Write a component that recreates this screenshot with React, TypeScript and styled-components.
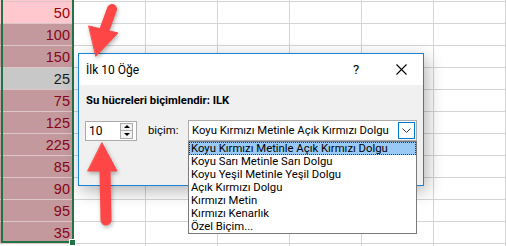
import { Fragment } from "react";
import styled, { createGlobalStyle } from "styled-components";

const GlobalStyle = createGlobalStyle`
  html, body {
    margin: 0;
    padding: 0;
    background: #fff;
  }
  body {
    overflow: hidden;
  }
`;

const Screen = styled.div`
  position: relative;
  width: 506px;
  height: 246px;
  overflow: hidden;
  background: #fff;
`;

const Sheet = styled.div`
  display: grid;
  grid-template-columns: 74px repeat(6, 72px);
  grid-auto-rows: 22px;
  margin-top: -20px;
`;

type CellTone = "plain" | "active" | "selected" | "grey";

const toneBg: Record<CellTone, string> = {
  plain: "#fff",
  active: "#ffc7ce",
  selected: "#c4999d",
  grey: "#c8c8c8",
};

const toneInk: Record<CellTone, string> = {
  plain: "#000",
  active: "#9c0006",
  selected: "#86051a",
  grey: "#1a1a1a",
};

const Cell = styled.div<{ $tone: CellTone; $first?: boolean }>`
  box-sizing: border-box;
  display: flex;
  align-items: center;
  justify-content: flex-end;
  padding-right: 4px;
  background: ${({ $tone }) => toneBg[$tone]};
  color: ${({ $tone }) => toneInk[$tone]};
  border-right: ${({ $first }) => ($first ? "none" : "1px solid #d4d4d4")};
  border-bottom: 1px solid ${({ $first }) => ($first ? "#dcc6c8" : "#d4d4d4")};
  font-family: "Liberation Sans", Arial, sans-serif;
  font-size: 14.5px;
  padding-top: 1px;
`;

const Selection = styled.div`
  position: absolute;
  left: 1px;
  top: -4px;
  width: 73px;
  height: 247px;
  box-sizing: border-box;
  border: 2px solid #217346;
  pointer-events: none;
`;

const FillHandle = styled.div`
  position: absolute;
  right: -4px;
  bottom: -5px;
  width: 5px;
  height: 5px;
  background: #217346;
  border: 1px solid #fff;
`;

const Dialog = styled.div`
  position: absolute;
  left: 78px;
  top: 53px;
  width: 346px;
  height: 133px;
  box-sizing: border-box;
  border: 1px solid #1883d7;
  background: #f0f0f0;
  box-shadow: 3px 5px 16px rgba(0, 0, 0, 0.3);
  display: flex;
  flex-direction: column;
  font-family: Roboto, "Noto Sans", sans-serif;
  font-size: 11.3px;
  color: #000;
`;

const TitleBar = styled.div`
  height: 31px;
  flex-shrink: 0;
  background: #fff;
  display: flex;
  align-items: center;
  padding-left: 7px;
`;

const TitleText = styled.span`
  font-size: 12px;
  flex: 1;
`;

const TitleButton = styled.span<{ $w: number; $gap?: number }>`
  width: ${({ $w }) => $w}px;
  margin-right: ${({ $gap }) => $gap ?? 0}px;
  display: flex;
  justify-content: center;
  align-items: center;
  font-size: 13px;
`;

const Body = styled.div`
  display: flex;
  flex-direction: column;
  padding: 8px 6px 0 6px;
`;

const Heading = styled.div`
  font-weight: 700;
  line-height: 15px;
  margin-left: 1px;
`;

const FieldRow = styled.div`
  display: flex;
  align-items: center;
  margin-top: 12px;
`;

const Spinner = styled.div`
  width: 52px;
  height: 20px;
  box-sizing: border-box;
  border: 1px solid #ababab;
  background: #fff;
  display: flex;
  align-items: center;
  padding: 1px 3px 1px 3px;
  font-size: 12px;
`;

const SpinValue = styled.span`
  flex: 1;
`;

const SpinButtons = styled.div`
  width: 13px;
  height: 16px;
  box-sizing: border-box;
  border: 1px solid #ababab;
  background: #f2f2f2;
  display: flex;
  flex-direction: column;
`;

const SpinHalf = styled.div<{ $up?: boolean }>`
  flex: 1;
  display: flex;
  align-items: center;
  justify-content: center;
  border-bottom: ${({ $up }) => ($up ? "1px solid #ababab" : "none")};
  &::after {
    content: "";
    border-left: 3px solid transparent;
    border-right: 3px solid transparent;
    ${({ $up }) =>
      $up ? "border-bottom: 3px solid #000;" : "border-top: 3px solid #000;"}
  }
`;

const Label = styled.span`
  margin-left: 11px;
  width: 40px;
`;

const Combo = styled.div`
  position: relative;
  width: 229px;
  height: 21px;
  box-sizing: border-box;
  border: 1px solid #ababab;
  background: #fff;
  display: flex;
  align-items: center;
  padding-left: 3px;
`;

const ComboText = styled.span`
  flex: 1;
  white-space: nowrap;
`;

const ComboButton = styled.div`
  width: 17px;
  height: 17px;
  margin-right: 1px;
  box-sizing: border-box;
  border: 1px solid #0078d7;
  background: #fff;
  display: flex;
  align-items: center;
  justify-content: center;
`;

const List = styled.ul`
  position: absolute;
  left: -1px;
  top: 20px;
  width: 229px;
  margin: 0;
  padding: 0;
  list-style: none;
  box-sizing: border-box;
  border: 1px solid #7a7a7a;
  background: #fff;
  z-index: 2;
`;

const Item = styled.li<{ $active?: boolean }>`
  height: 13px;
  line-height: 13px;
  padding-left: 2px;
  white-space: nowrap;
  box-sizing: border-box;
  background: ${({ $active }) => ($active ? "#99c9f5" : "transparent")};
  outline: ${({ $active }) => ($active ? "1px dotted #333" : "none")};
  outline-offset: -1px;
`;

const Arrows = styled.svg`
  position: absolute;
  left: 0;
  top: 0;
  pointer-events: none;
  filter: drop-shadow(1px 2px 2px rgba(0, 0, 0, 0.3));
`;

const values: { v: string; tone: CellTone }[] = [
  { v: "", tone: "active" },
  { v: "50", tone: "active" },
  { v: "100", tone: "selected" },
  { v: "150", tone: "selected" },
  { v: "25", tone: "grey" },
  { v: "75", tone: "selected" },
  { v: "125", tone: "selected" },
  { v: "225", tone: "selected" },
  { v: "85", tone: "selected" },
  { v: "90", tone: "selected" },
  { v: "95", tone: "selected" },
  { v: "35", tone: "selected" },
  { v: "", tone: "plain" },
];

const options = [
  "Koyu Kırmızı Metinle Açık Kırmızı Dolgu",
  "Koyu Sarı Metinle Sarı Dolgu",
  "Koyu Yeşil Metinle Yeşil Dolgu",
  "Açık Kırmızı Dolgu",
  "Kırmızı Metin",
  "Kırmızı Kenarlık",
  "Özel Biçim...",
];

export default function App() {
  return (
    <Screen>
      <GlobalStyle />
      <Sheet>
        {values.map((row, i) => (
          <Fragment key={i}>
            <Cell $tone={row.tone} $first={row.tone !== "plain"}>
              {row.v}
            </Cell>
            {Array.from({ length: 6 }).map((_, j) => (
              <Cell key={j} $tone="plain" />
            ))}
          </Fragment>
        ))}
      </Sheet>
      <Selection>
        <FillHandle />
      </Selection>

      <Dialog>
        <TitleBar>
          <TitleText>İlk 10 Öğe</TitleText>
          <TitleButton $w={20} $gap={13}>?</TitleButton>
          <TitleButton $w={44}>
            <svg width="11" height="11" viewBox="0 0 11 11">
              <path d="M0.5 0.5 L10.5 10.5 M10.5 0.5 L0.5 10.5" stroke="#000" strokeWidth="1.1" />
            </svg>
          </TitleButton>
        </TitleBar>
        <Body>
          <Heading>Su hücreleri biçimlendir: ILK</Heading>
          <FieldRow>
            <Spinner>
              <SpinValue>10</SpinValue>
              <SpinButtons>
                <SpinHalf $up />
                <SpinHalf />
              </SpinButtons>
            </Spinner>
            <Label>biçim:</Label>
            <Combo>
              <ComboText>{options[0]}</ComboText>
              <ComboButton>
                <svg width="9" height="5" viewBox="0 0 9 5">
                  <path d="M0.5 0.5 L4.5 4.5 L8.5 0.5" fill="none" stroke="#333" strokeWidth="1" />
                </svg>
              </ComboButton>
              <List>
                {options.map((o, i) => (
                  <Item key={o} $active={i === 0}>
                    {o}
                  </Item>
                ))}
              </List>
            </Combo>
          </FieldRow>
        </Body>
      </Dialog>

      <Arrows width="506" height="246" viewBox="0 0 506 246">
        <g fill="#fe4646" stroke="#fe4646" strokeLinecap="round" strokeLinejoin="round">
          <line x1="112" y1="9" x2="104" y2="31" strokeWidth="10" />
          <polygon points="89,26 118,33 96,56" strokeWidth="1" />
          <line x1="105" y1="170" x2="106" y2="220" strokeWidth="11" />
          <polygon points="102,143 117,171 88,171" strokeWidth="1" />
        </g>
      </Arrows>
    </Screen>
  );
}
